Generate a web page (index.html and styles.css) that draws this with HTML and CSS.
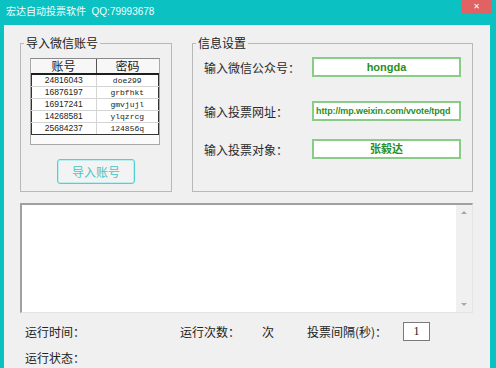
FILE: index.html
```html
<!DOCTYPE html>
<html lang="zh-CN">
<head>
    <meta charset="UTF-8">
    <meta name="viewport" content="width=device-width, initial-scale=1.0">
    <title>宏达自动投票软件</title>
    <link rel="stylesheet" href="styles.css">
</head>
<body>
    <div class="titlebar">
        <span class="title">宏达自动投票软件&nbsp;&nbsp;QQ:79993678</span>
        <span class="close">&#x2715;</span>
    </div>
    <div class="client">
        <div class="top">
            <fieldset class="group accounts">
                <legend>导入微信账号</legend>
                <div class="list">
                    <table>
                        <thead>
                            <tr><th>账号</th><th>密码</th></tr>
                        </thead>
                        <tbody>
                            <tr><td>24816043</td><td class="pw">doe299</td></tr>
                            <tr><td>16876197</td><td class="pw">grbfhkt</td></tr>
                            <tr><td>16917241</td><td class="pw">gmvjujl</td></tr>
                            <tr><td>14268581</td><td class="pw">ylqzrcg</td></tr>
                            <tr><td>25684237</td><td class="pw">124856q</td></tr>
                        </tbody>
                    </table>
                </div>
                <button class="import">导入账号</button>
            </fieldset>
            <fieldset class="group settings">
                <legend>信息设置</legend>
                <div class="field first">
                    <label>输入微信公众号：</label>
                    <div class="box">hongda</div>
                </div>
                <div class="field second">
                    <label>输入投票网址：</label>
                    <div class="box url">http://mp.weixin.com/vvote/tpqd</div>
                </div>
                <div class="field third">
                    <label>输入投票对象：</label>
                    <div class="box">张毅达</div>
                </div>
            </fieldset>
        </div>
        <div class="log">
            <div class="scroll">
                <span class="arrow up"></span>
                <span class="arrow down"></span>
            </div>
        </div>
        <div class="stats">
            <span class="c1">运行时间：</span>
            <span class="c2">运行次数：</span>
            <span class="c3">次</span>
            <span class="c4">投票间隔(秒)：</span>
            <span class="num">1</span>
        </div>
        <div class="status">运行状态：</div>
    </div>
</body>
</html>
```

FILE: styles.css
```css
body {
    margin: 0;
    height: 368px;
    overflow: hidden;
    background-color: #0bc1c1;
    font-family: "Noto Sans CJK SC", sans-serif;
    color: #222;
}
.titlebar {
    height: 25px;
    display: flex;
    justify-content: space-between;
    align-items: flex-start;
}
.title {
    padding-left: 6px;
    font-family: "Liberation Sans", "Noto Sans CJK SC", sans-serif;
    font-size: 10px;
    line-height: 24px;
    color: #f2ffff;
}
.close {
    width: 31px;
    height: 14px;
    margin-right: 4px;
    background-color: #e06262;
    color: #fff;
    font-size: 8px;
    line-height: 14px;
    text-align: center;
    font-family: "DejaVu Sans", sans-serif;
    font-weight: bold;
}
.client {
    margin: 0 6px 0 4px;
    height: 343px;
    padding: 0 17px 0 16px;
    background-color: #f0f0f0;
    font-size: 12px;
}
.top {
    display: flex;
    gap: 20px;
    padding-top: 11px;
}
.group {
    margin: 0;
    padding: 0;
    min-width: 0;
    border: 1px solid #b8b8b8;
}
.group legend {
    margin-left: 3px;
    padding: 0 2px;
    font-size: 12px;
    line-height: 14px;
    color: #222;
}
.accounts {
    width: 152px;
    box-sizing: border-box;
    padding-bottom: 7px;
}
.settings {
    flex: 1;
}
.list {
    margin: 8px 0 0 9px;
    width: 130px;
    height: 87px;
    box-sizing: border-box;
    border: 1px solid #a8a8a8;
    border-top-color: #8a8a8a;
    background-color: #fafafa;
}
.list table {
    width: 128px;
    border-collapse: collapse;
    table-layout: fixed;
}
.list th {
    height: 14px;
    padding: 0;
    font-size: 12px;
    font-weight: normal;
    line-height: 14px;
    background-color: #f7f7f7;
    border-bottom: 2px solid #1e1e1e;
    border-right: 1px solid #555;
}
.list th:first-child {
    width: 64px;
}
.list th:last-child {
    border-right: none;
}
.list td {
    height: 11px;
    padding: 0;
    font-family: "Liberation Sans", sans-serif;
    font-size: 8.5px;
    line-height: 11px;
    text-align: center;
    background-color: #fff;
    border-bottom: 1px solid #d4d4d4;
    border-left: 1px solid #d4d4d4;
}
.list td:first-child {
    border-left: 1px solid #333;
}
.list td:last-child {
    border-right: 1px solid #333;
}
.list tr:last-child td {
    border-bottom: 1px solid #333;
}
.list td.pw {
    font-family: "Liberation Mono", monospace;
    font-size: 8px;
}
.import {
    display: block;
    margin: 14px 0 0 36px;
    width: 78px;
    height: 25px;
    padding: 0;
    border: 1px solid #4fd2d2;
    border-radius: 3px;
    box-shadow: inset 0 0 0 1px #bdeeee;
    background-color: #f3f3f3;
    color: #45c6c6;
    font-family: "Noto Sans CJK SC", sans-serif;
    font-size: 12px;
}
.field {
    display: flex;
    align-items: center;
    padding-left: 11px;
}
.field.first {
    margin-top: 7px;
}
.field.second {
    margin-top: 24px;
}
.field.third {
    margin-top: 18px;
}
.field label {
    width: 108px;
    font-size: 12px;
    color: #2a2a2a;
}
.box {
    width: 149px;
    height: 20px;
    box-sizing: border-box;
    border: 2px solid #88cc88;
    background-color: #fff;
    color: #2a8f1e;
    font-family: "Liberation Sans", "Noto Sans CJK SC", sans-serif;
    font-size: 11px;
    font-weight: bold;
    line-height: 16px;
    text-align: center;
    white-space: nowrap;
    overflow: hidden;
}
.box.url {
    font-size: 9px;
    letter-spacing: -0.1px;
    text-align: left;
    padding-left: 2px;
}
.log {
    margin-top: 11px;
    height: 110px;
    box-sizing: border-box;
    display: flex;
    justify-content: flex-end;
    background-color: #fff;
    border-top: 2px solid #a0a0a0;
    border-left: 2px solid #a0a0a0;
    border-right: 1px solid #e4e4e4;
    border-bottom: 1px solid #e4e4e4;
}
.scroll {
    width: 16px;
    display: flex;
    flex-direction: column;
    justify-content: space-between;
    align-items: center;
    padding: 6px 0;
    background-color: #f0f0f0;
}
.arrow {
    width: 0;
    height: 0;
    border-left: 3px solid transparent;
    border-right: 3px solid transparent;
}
.arrow.up {
    border-bottom: 3px solid #a6a6a6;
}
.arrow.down {
    border-top: 3px solid #a6a6a6;
}
.stats {
    display: flex;
    align-items: center;
    margin-top: 9px;
    height: 19px;
    padding-left: 5px;
}
.stats .c1 {
    width: 155px;
}
.stats .c2 {
    width: 82px;
}
.stats .c3 {
    width: 45px;
}
.stats .c4 {
    width: 96px;
}
.num {
    width: 27px;
    height: 19px;
    box-sizing: border-box;
    border: 1px solid #7a7a7a;
    background-color: #fff;
    font-family: "Liberation Serif", serif;
    font-size: 12px;
    line-height: 17px;
    text-align: center;
}
.status {
    margin-top: 7px;
    padding-left: 5px;
    line-height: 20px;
}
```
